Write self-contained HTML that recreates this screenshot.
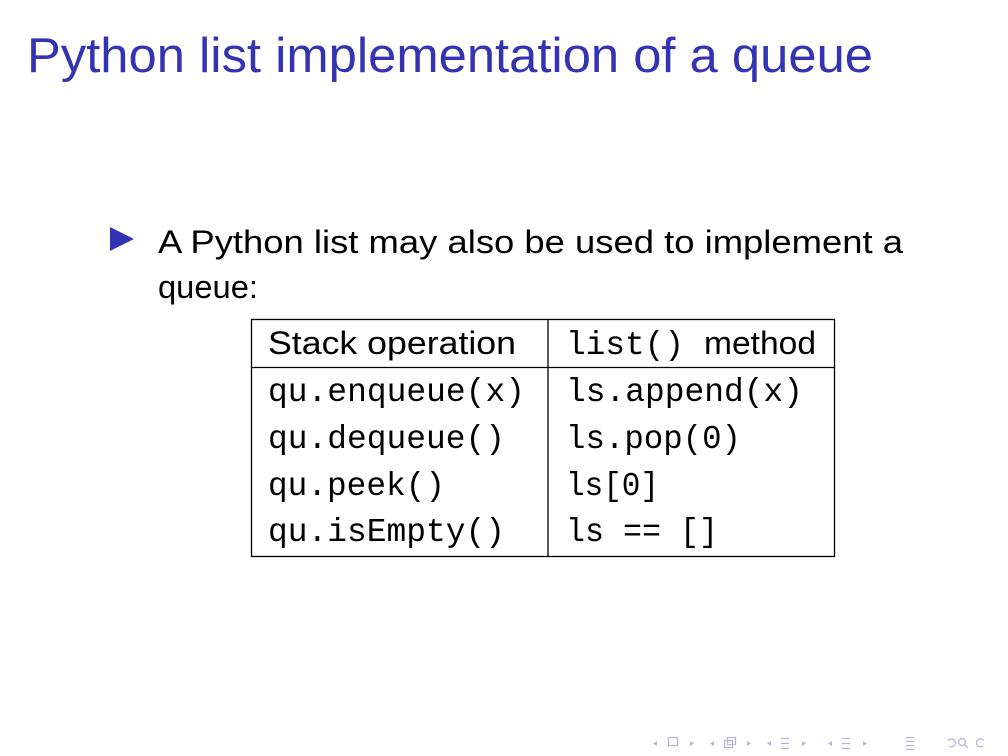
<!DOCTYPE html>
<html><head><meta charset="utf-8"><style>
html,body{margin:0;padding:0;background:#fff;}
svg{display:block;}
</style></head><body>
<svg width="1008" height="756" viewBox="0 0 1008 756" xmlns="http://www.w3.org/2000/svg">
<rect width="1008" height="756" fill="#fff"/>
<text x="27" y="72" font-family="Liberation Sans, sans-serif" font-size="49" fill="#3333b3" textLength="846" lengthAdjust="spacingAndGlyphs">Python list implementation of a queue</text>
<polygon points="110,227 134,239 110,251" fill="#3333b3"/>
<g font-family="Liberation Sans, sans-serif" font-size="32" fill="#000">
<text x="158" y="253" textLength="745" lengthAdjust="spacingAndGlyphs">A Python list may also be used to implement a</text>
<text x="158" y="298" textLength="100" lengthAdjust="spacingAndGlyphs">queue:</text>
<text x="268" y="354" textLength="248" lengthAdjust="spacingAndGlyphs">Stack operation</text>
<text x="704" y="354" textLength="112" lengthAdjust="spacingAndGlyphs">method</text>
</g>
<g font-family="Liberation Mono, monospace" font-size="33" fill="#000">
<text x="566" y="354" textLength="118" lengthAdjust="spacingAndGlyphs">list()</text>
<text x="268" y="401" textLength="257" lengthAdjust="spacingAndGlyphs">qu.enqueue(x)</text>
<text x="566" y="401" textLength="237" lengthAdjust="spacingAndGlyphs">ls.append(x)</text>
<text x="268" y="448" textLength="237" lengthAdjust="spacingAndGlyphs">qu.dequeue()</text>
<text x="566" y="448" textLength="175" lengthAdjust="spacingAndGlyphs">ls.pop(0)</text>
<text x="268" y="495" textLength="177" lengthAdjust="spacingAndGlyphs">qu.peek()</text>
<text x="566" y="495" textLength="93" lengthAdjust="spacingAndGlyphs">ls[0]</text>
<text x="268" y="541" textLength="237" lengthAdjust="spacingAndGlyphs">qu.isEmpty()</text>
<text x="566" y="541" textLength="152" lengthAdjust="spacingAndGlyphs">ls == []</text>
</g>
<g stroke="#000" stroke-width="1.3" fill="none">
<rect x="251.5" y="319.5" width="583" height="237"/>
<line x1="548" y1="319" x2="548" y2="557"/>
<line x1="251" y1="367.5" x2="835" y2="367.5"/>
</g>
<g fill="#b4b4d8" stroke="#b4b4d8" stroke-width="1.2">
<polygon points="657,741 653,743.5 657,746" stroke="none"/>
<rect x="668.5" y="737.5" width="9" height="8" fill="none"/>
<polygon points="690,741 694,743.5 690,746" stroke="none"/>
<polygon points="714,741 710,743.5 714,746" stroke="none"/>
<rect x="724.5" y="740.5" width="8" height="7" fill="none"/>
<rect x="727.5" y="737.5" width="8" height="7" fill="none"/>
<polygon points="747,741 751,743.5 747,746" stroke="none"/>
<polygon points="771,741 767,743.5 771,746" stroke="none"/>
<line x1="781" y1="738.5" x2="789" y2="738.5"/><line x1="781" y1="743.5" x2="789" y2="743.5"/><line x1="781" y1="748.5" x2="789" y2="748.5"/>
<polygon points="802,741 806,743.5 802,746" stroke="none"/>
<polygon points="832,741 828,743.5 832,746" stroke="none"/>
<line x1="842" y1="738.5" x2="850" y2="738.5"/><line x1="842" y1="743.5" x2="850" y2="743.5"/><line x1="842" y1="748.5" x2="850" y2="748.5"/>
<polygon points="863,741 867,743.5 863,746" stroke="none"/>
<line x1="906" y1="737.5" x2="914" y2="737.5"/><line x1="906" y1="741.5" x2="914" y2="741.5"/><line x1="906" y1="745.5" x2="914" y2="745.5"/><line x1="906" y1="749.5" x2="914" y2="749.5"/>
<path d="M948 741 a4 4 0 1 1 1 5" fill="none"/>
<circle cx="962" cy="742" r="3.5" fill="none"/><line x1="965" y1="745" x2="968" y2="748"/>
<path d="M983 746 a4 4 0 1 1 1 -5" fill="none"/>
</g>
</svg>
</body></html>
